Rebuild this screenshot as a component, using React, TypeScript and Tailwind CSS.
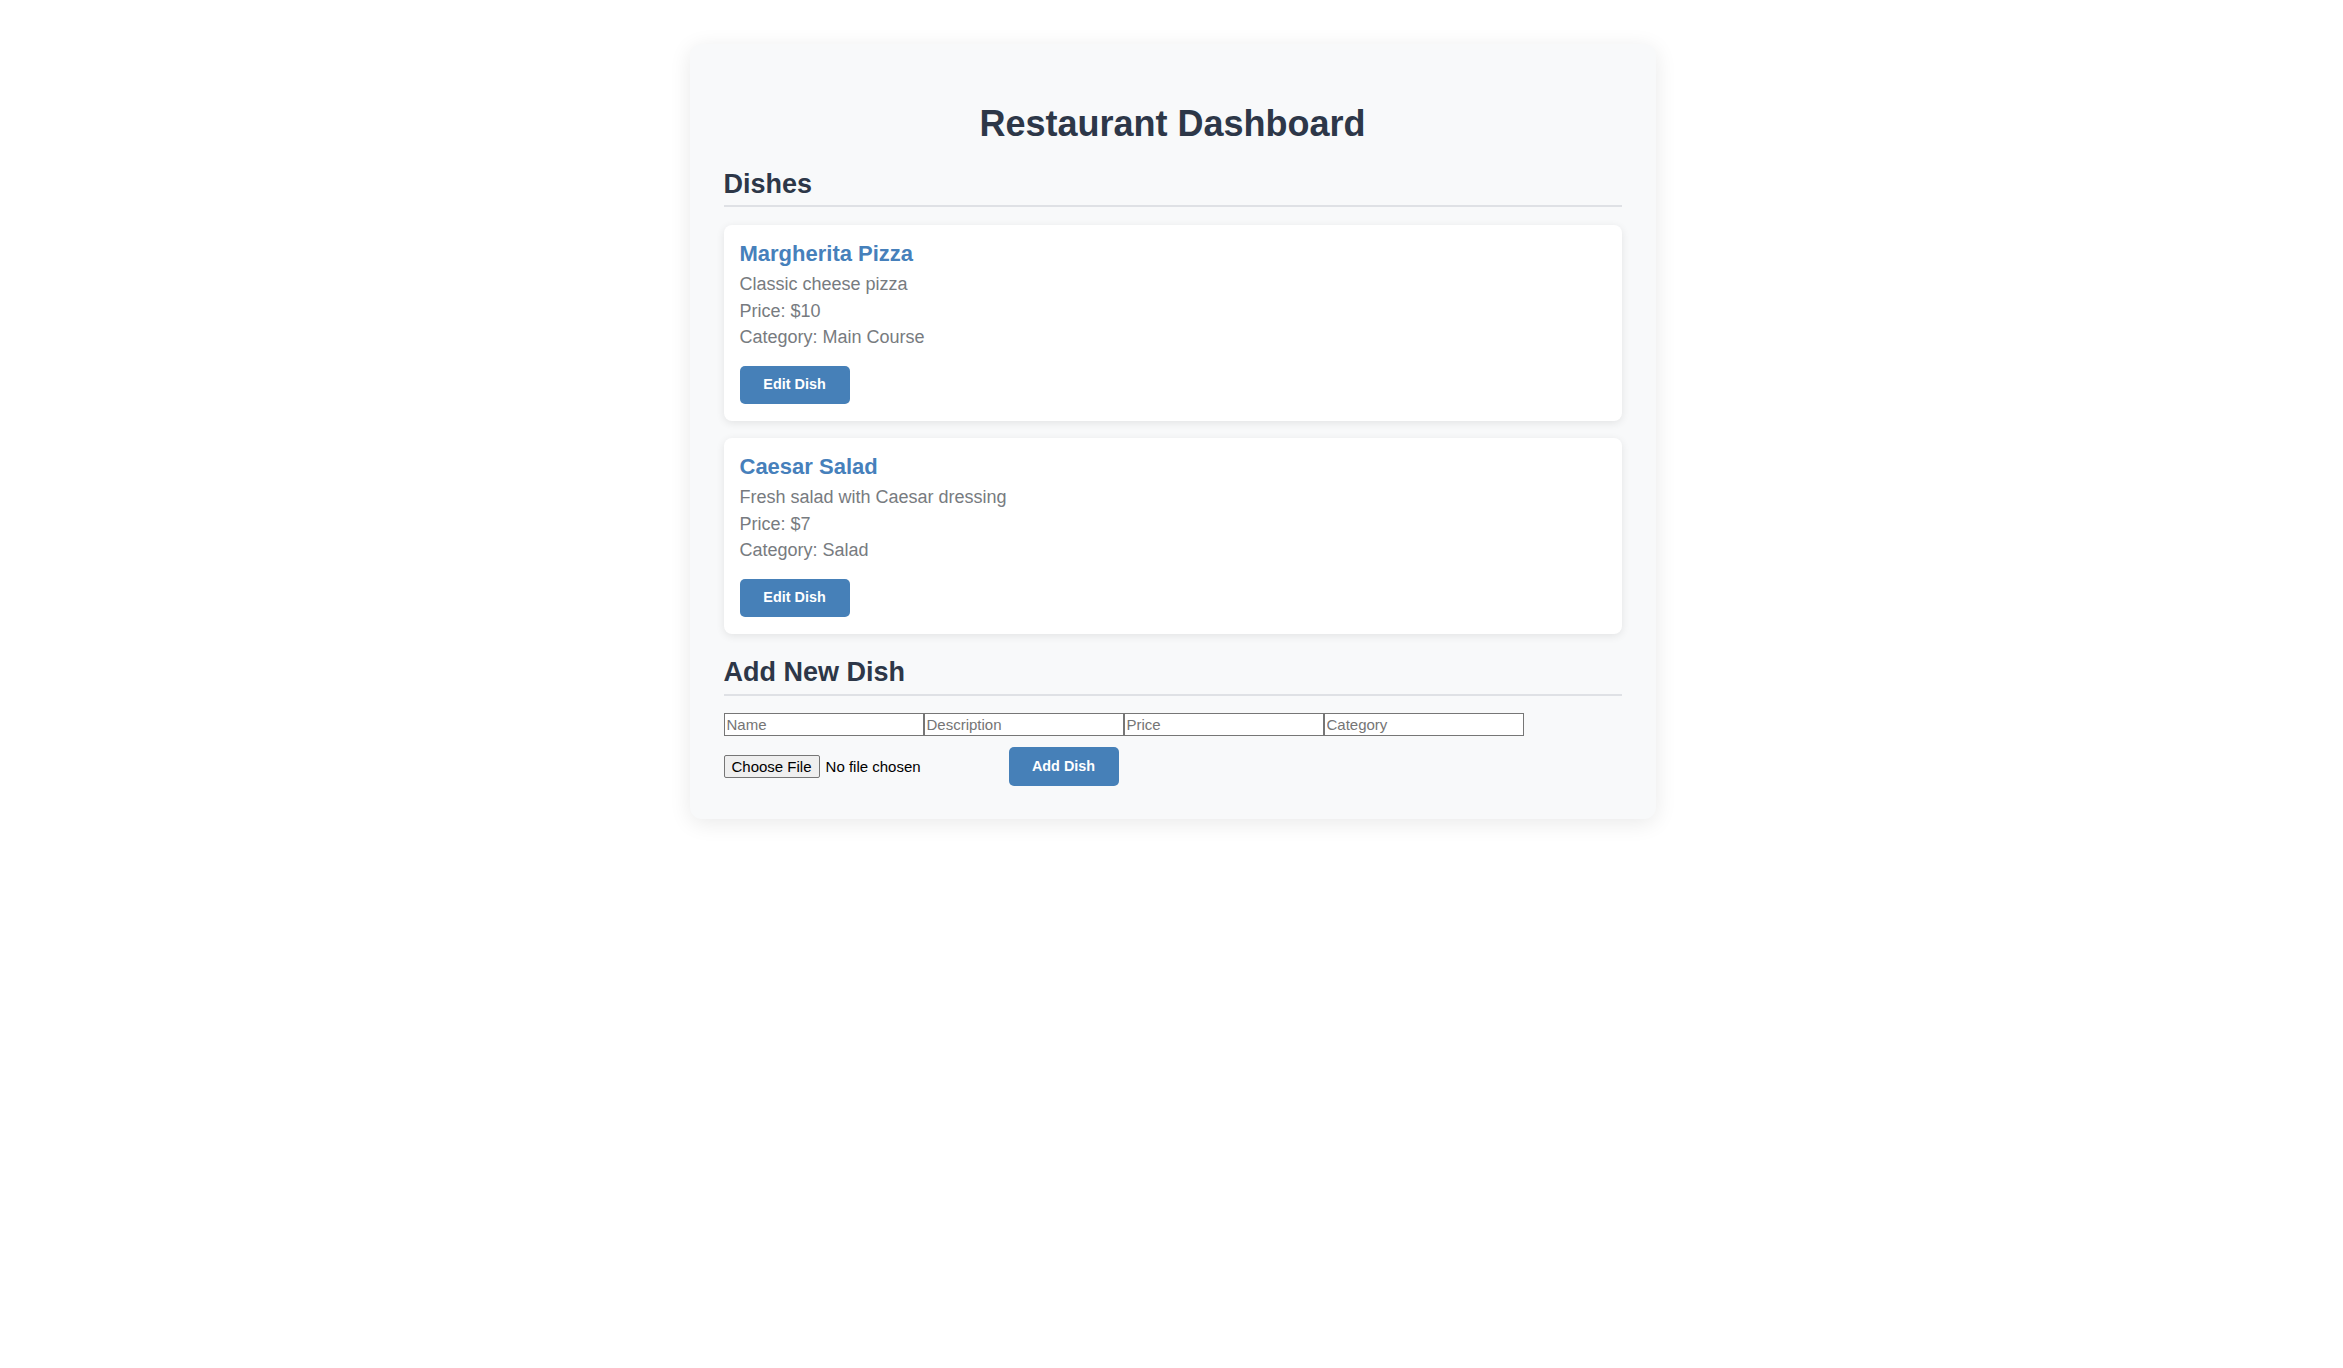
import React, { useState } from 'react';

interface Dish {
  name: string;
  description: string;
  price: number;
  category: string;
}

const initialDishes: Dish[] = [
  { name: 'Margherita Pizza', description: 'Classic cheese pizza', price: 10, category: 'Main Course' },
  { name: 'Caesar Salad', description: 'Fresh salad with Caesar dressing', price: 7, category: 'Salad' },
];

function DishCard({ dish }: { dish: Dish }) {
  return (
    <div className="mb-[17px] rounded-[8px] bg-white px-[16px] pt-[16px] pb-[17.5px] shadow-[0_2px_8px_rgba(0,0,0,0.09)]">
      <h3 className="text-[22px] leading-[25px] font-bold text-[#4680bb]">{dish.name}</h3>
      <div className="mt-[5px] text-[18px] leading-[26.5px] text-[#777b80]">
        <p>{dish.description}</p>
        <p>Price: ${dish.price}</p>
        <p>Category: {dish.category}</p>
      </div>
      <button
        type="button"
        className="mt-[15px] h-[38px] w-[110px] rounded-[5px] bg-[#4680b8] text-[14.4px] font-bold text-white"
      >
        Edit Dish
      </button>
    </div>
  );
}

export default function App() {
  const [dishes] = useState<Dish[]>(initialDishes);

  const inputClass =
    'h-[23px] w-[200px] border border-[#767676] bg-white px-[2px] text-[15px] text-black placeholder:text-[#757575]';

  return (
    <div className="min-h-screen bg-white pt-[44px] font-['Liberation_Sans',Arial,sans-serif]">
      <div className="mx-auto w-[966px] translate-x-[1px] rounded-[12px] bg-[#f8f9fa] px-[34px] pt-[33px] pb-[33px] shadow-[0_4px_22px_rgba(0,0,0,0.09)]">
        <h1 className="mt-[26px] text-center text-[36px] leading-[41px] font-bold text-[#2d3748]">
          Restaurant Dashboard
        </h1>

        <h2 className="mt-[25px] border-b-2 border-[#dfe1e5] pb-[5px] text-[27px] leading-[31px] font-bold text-[#2d3748]">
          Dishes
        </h2>
        <div className="mt-[18px]">
          {dishes.map((dish) => (
            <DishCard key={dish.name} dish={dish} />
          ))}
        </div>

        <h2 className="mt-[23px] border-b-2 border-[#dfe1e5] pb-[6px] text-[27px] leading-[31px] font-bold text-[#2d3748]">
          Add New Dish
        </h2>
        <form className="mt-[17px]" onSubmit={(e) => e.preventDefault()}>
          <div className="flex">
            <input type="text" placeholder="Name" className={inputClass} />
            <input type="text" placeholder="Description" className={inputClass} />
            <input type="text" placeholder="Price" className={inputClass} />
            <input type="text" placeholder="Category" className={inputClass} />
          </div>
          <div className="mt-[11px] flex items-center">
            <input
              type="file"
              className="w-[280px] text-[15px] text-black file:mr-[6px] file:h-[23px] file:rounded-[2px] file:border file:border-[#767676] file:bg-[#efefef] file:px-[7px] file:text-black"
            />
            <button
              type="submit"
              className="ml-[5px] h-[39px] w-[110px] rounded-[5px] bg-[#4680b8] text-[14.4px] font-bold text-white"
            >
              Add Dish
            </button>
          </div>
        </form>
      </div>
    </div>
  );
}
